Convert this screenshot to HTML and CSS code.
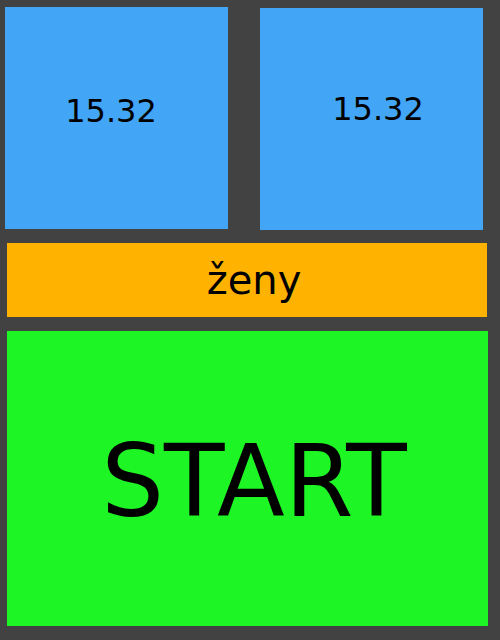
FILE: index.html
```html
<!DOCTYPE html>
<html>
<head>
<meta charset="utf-8">
<link rel="stylesheet" href="styles.css">
</head>
<body>
<div class="screen">
  <div class="top-row">
    <div class="time time-left">15.32</div>
    <div class="time time-right">15.32</div>
  </div>
  <div class="category">ženy</div>
  <div class="start">START</div>
</div>
</body>
</html>
```

FILE: styles.css
```css
html, body {
  margin: 0;
  padding: 0;
  background: #424242;
}
.screen {
  width: 500px;
  height: 640px;
  display: flex;
  flex-direction: column;
  font-family: "DejaVu Sans", sans-serif;
  color: #000;
}
.top-row {
  display: flex;
  align-items: flex-start;
  gap: 32px;
  padding: 7px 0 0 5px;
  height: 223px;
}
.time {
  width: 223px;
  height: 222px;
  box-sizing: border-box;
  background: #42a5f5;
  display: flex;
  align-items: center;
  justify-content: center;
  font-size: 32px;
}
.time-left {
  padding: 0 11px 15px 0;
}
.time-right {
  margin-top: 1px;
  padding: 0 0 20px 13px;
}
.category {
  margin: 13px 0 0 7px;
  width: 480px;
  height: 74px;
  box-sizing: border-box;
  background: #ffb300;
  display: flex;
  align-items: center;
  justify-content: center;
  padding-left: 14px;
  font-size: 40px;
}
.start {
  margin: 14px 0 0 7px;
  width: 481px;
  height: 295px;
  box-sizing: border-box;
  background: #1ef524;
  display: flex;
  align-items: center;
  justify-content: center;
  padding: 6px 0 0 13px;
  font-size: 99px;
}
```
